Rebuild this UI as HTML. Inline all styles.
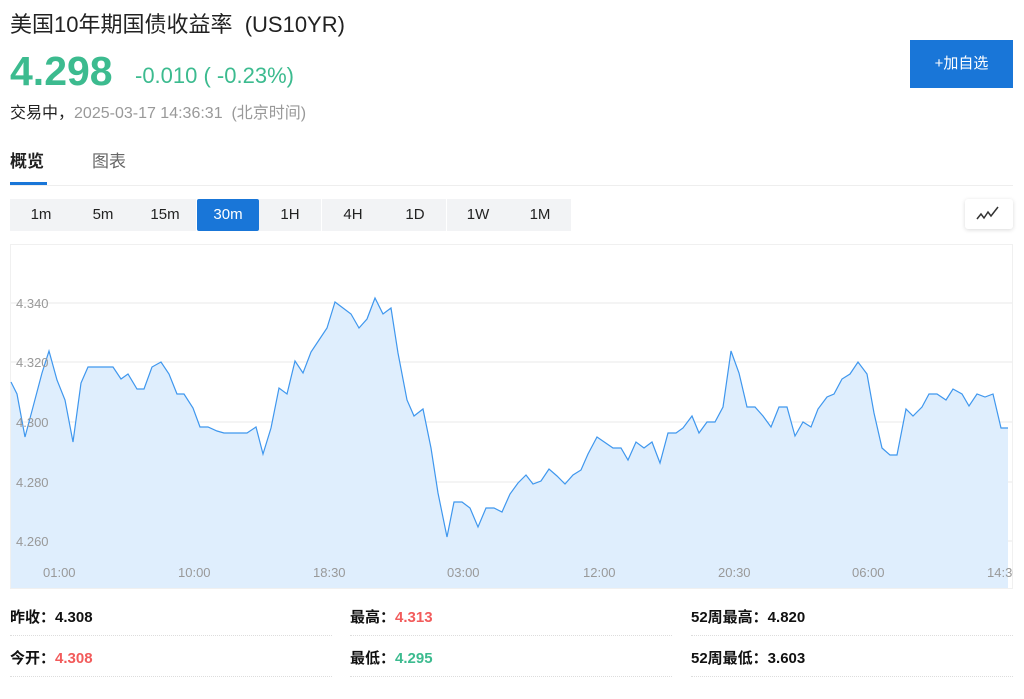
<!DOCTYPE html>
<html><head><meta charset="utf-8"><style>
*{margin:0;padding:0;box-sizing:border-box}
body{width:1024px;height:699px;background:#fff;font-family:"Liberation Sans","Noto Sans CJK SC",sans-serif;position:relative;overflow:hidden;color:#222}
.a{position:absolute;white-space:nowrap}
.per{position:absolute;top:199px;height:32px;width:62px;background:#f2f3f5;text-align:center;line-height:32px;font-size:15px;color:#222}
.per.on{background:#1976d8;color:#fff;border-radius:2px}
.st{position:absolute;font-size:15px;font-weight:bold;color:#111}
.ln{position:absolute;height:0;border-top:1px dotted #ddd}
</style></head><body>
<div class="a" style="left:10px;top:7px;font-size:22px;color:#222">美国10年期国债收益率&nbsp;&nbsp;(US10YR)</div>
<div class="a" style="left:10px;top:48px;font-size:41px;font-weight:bold;color:#3cbb8f">4.298</div>
<div class="a" style="left:135px;top:63px;font-size:22px;color:#3cbb8f">-0.010 ( -0.23%)</div>
<div class="a" style="left:10px;top:99px;font-size:16px;color:#222">交易中，<span style="color:#999">2025-03-17 14:36:31&nbsp; (北京时间)</span></div>
<div class="a" style="left:910px;top:40px;width:103px;height:48px;background:#1976d8;color:#fff;font-size:15px;text-align:center;line-height:48px">+加自选</div>
<div class="a" style="left:10px;top:147px;font-size:17px;font-weight:bold;color:#222">概览</div>
<div class="a" style="left:92px;top:147px;font-size:17px;color:#666">图表</div>
<div class="a" style="left:10px;top:182px;width:37px;height:3px;background:#1976d8"></div>
<div class="a" style="left:10px;top:185px;width:1003px;height:1px;background:#eee"></div>
<div class="per" style="left:10px">1m</div><div class="per" style="left:72px">5m</div><div class="per" style="left:134px">15m</div><div class="per on" style="left:197px">30m</div><div class="per" style="left:259px">1H</div><div class="per" style="left:322px">4H</div><div class="per" style="left:384px">1D</div><div class="per" style="left:447px">1W</div><div class="per" style="left:509px">1M</div>
<div class="a" style="left:965px;top:199px;width:48px;height:30px;background:#fff;box-shadow:0 1px 4px rgba(0,0,0,.15);border-radius:3px">
<svg width="48" height="30"><polyline points="12,20 16,15 19,19 23,13 26,17 33,8" fill="none" stroke="#333" stroke-width="1.5"/></svg></div>
<svg class="a" style="left:0;top:0" width="1024" height="699">
<defs><clipPath id="c"><rect x="10" y="244" width="1003" height="345"/></clipPath></defs>
<rect x="10.5" y="244.5" width="1002" height="344" fill="none" stroke="#f0f0f0"/>
<g stroke="#f0f0f0" stroke-width="1.5"><line x1="11" x2="1012" y1="303" y2="303"/><line x1="11" x2="1012" y1="362" y2="362"/><line x1="11" x2="1012" y1="422" y2="422"/><line x1="11" x2="1012" y1="482" y2="482"/><line x1="11" x2="1012" y1="541" y2="541"/></g>
<polygon fill="#dfeefd" points="11,588 11,382 17,394 25,437 33,407 42,373 49,351 57,380 65,400 73,442 81,383 88,367 113,367 121,379 128,374 137,389 144,389 152,367 161,362 169,374 177,394 184,394 193,408 200,427 208,427 217,431 224,433 247,433 256,427 263,454 271,428 279,388 287,394 295,361 303,373 311,352 319,340 327,328 335,302 343,308 351,314 359,328 367,319 375,298 383,314 391,308 398,353 407,400 414,416 423,409 431,448 438,493 447,537 454,502 462,502 470,508 478,527 486,508 494,508 502,512 510,494 518,483 526,475 533,484 541,481 549,469 557,476 565,484 573,475 581,470 588,454 597,437 613,448 621,448 628,460 636,442 644,448 652,442 660,463 668,433 676,433 683,428 692,416 699,433 707,422 715,422 723,407 731,351 739,373 747,407 755,407 763,416 771,427 779,407 787,407 795,436 803,422 811,427 818,409 827,397 834,394 842,379 850,374 858,362 867,374 874,413 882,448 890,455 897,455 906,409 913,416 922,407 929,394 937,394 946,400 953,389 962,394 969,406 977,394 985,397 993,394 1001,428 1008,428 1008,588"/>
<polyline fill="none" stroke="#3f97ee" stroke-width="1.2" points="11,382 17,394 25,437 33,407 42,373 49,351 57,380 65,400 73,442 81,383 88,367 113,367 121,379 128,374 137,389 144,389 152,367 161,362 169,374 177,394 184,394 193,408 200,427 208,427 217,431 224,433 247,433 256,427 263,454 271,428 279,388 287,394 295,361 303,373 311,352 319,340 327,328 335,302 343,308 351,314 359,328 367,319 375,298 383,314 391,308 398,353 407,400 414,416 423,409 431,448 438,493 447,537 454,502 462,502 470,508 478,527 486,508 494,508 502,512 510,494 518,483 526,475 533,484 541,481 549,469 557,476 565,484 573,475 581,470 588,454 597,437 613,448 621,448 628,460 636,442 644,448 652,442 660,463 668,433 676,433 683,428 692,416 699,433 707,422 715,422 723,407 731,351 739,373 747,407 755,407 763,416 771,427 779,407 787,407 795,436 803,422 811,427 818,409 827,397 834,394 842,379 850,374 858,362 867,374 874,413 882,448 890,455 897,455 906,409 913,416 922,407 929,394 937,394 946,400 953,389 962,394 969,406 977,394 985,397 993,394 1001,428 1008,428"/>
<g fill="#999" font-size="13" font-family="Liberation Sans,sans-serif" clip-path="url(#c)">
<text x="16" y="308">4.340</text><text x="16" y="367">4.320</text><text x="16" y="427">4.300</text><text x="16" y="487">4.280</text><text x="16" y="546">4.260</text>
<text x="43" y="577">01:00</text><text x="178" y="577">10:00</text><text x="313" y="577">18:30</text><text x="447" y="577">03:00</text><text x="583" y="577">12:00</text><text x="718" y="577">20:30</text><text x="852" y="577">06:00</text><text x="987" y="577">14:30</text>
</g></svg>
<div class="st" style="left:10px;top:606px">昨收：4.308</div>
<div class="st" style="left:350px;top:606px">最高：<span style="color:#f25b5b">4.313</span></div>
<div class="st" style="left:691px;top:606px">52周最高：4.820</div>
<div class="st" style="left:10px;top:647px">今开：<span style="color:#f25b5b">4.308</span></div>
<div class="st" style="left:350px;top:647px">最低：<span style="color:#3cbb8f">4.295</span></div>
<div class="st" style="left:691px;top:647px">52周最低：3.603</div>
<div class="ln" style="left:10px;width:322px;top:635px"></div><div class="ln" style="left:350px;width:322px;top:635px"></div><div class="ln" style="left:691px;width:322px;top:635px"></div>
<div class="ln" style="left:10px;width:322px;top:676px"></div><div class="ln" style="left:350px;width:322px;top:676px"></div><div class="ln" style="left:691px;width:322px;top:676px"></div>
</body></html>
